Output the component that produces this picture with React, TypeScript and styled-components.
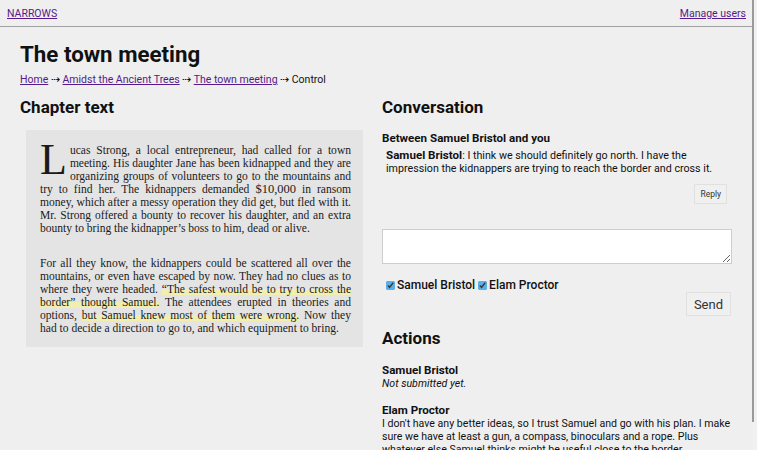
import styled, { createGlobalStyle } from 'styled-components';

const GlobalStyle = createGlobalStyle`
  html {
    background: #efefef;
  }
  body {
    margin: 0 5px 0 0;
    background: #efefef;
    font-family: Roboto, 'Liberation Sans', sans-serif;
    color: #111;
  }
  a {
    color: #551a8b;
  }
`;

const actions = [
  { name: 'Samuel Bristol', text: null },
  {
    name: 'Elam Proctor',
    text: "I don't have any better ideas, so I trust Samuel and go with his plan. I make sure we have at least a gun, a compass, binoculars and a rope. Plus whatever else Samuel thinks might be useful close to the border.",
  },
];

function App() {
  return (
    <>
      <GlobalStyle />
      <Styled.ScrollBar />
      <Styled.TopBar>
        <a href="#">NARROWS</a>
        <a href="#">Manage users</a>
      </Styled.TopBar>
      <Styled.Main>
        <Styled.Title>The town meeting</Styled.Title>
        <Styled.Breadcrumb>
          <a href="#">Home</a> ⇢ <a href="#">Amidst the Ancient Trees</a> ⇢ <a href="#">The town meeting</a> ⇢ Control
        </Styled.Breadcrumb>
        <Styled.Columns>
          <section>
            <Styled.Heading>Chapter text</Styled.Heading>
            <Styled.Chapter>
              <p>
                <Styled.DropCap>L</Styled.DropCap>ucas Strong, a local entrepreneur, had called for a town meeting. His
                daughter Jane has been kidnapped and they are organizing groups of volunteers to go to the mountains and
                try to find her. The kidnappers demanded <Styled.Money>$10,000</Styled.Money> in ransom money, which after a messy
                operation they did get, but fled with it. Mr. Strong offered a bounty to recover his daughter, and an
                extra bounty to bring the kidnapper’s boss to him, dead or alive.
              </p>
              <p>
                For all they know, the kidnappers could be scattered all over the mountains, or even have escaped by now.
                They had no clues as to where they were headed.{' '}
                <Styled.Mark>“The safest would be to try to cross the border” thought Samuel.</Styled.Mark> The attendees
                erupted in theories and options, <Styled.Mark>but Samuel knew most of them were wrong.</Styled.Mark> Now they
                had to decide a direction to go to, and which equipment to bring.
              </p>
            </Styled.Chapter>
          </section>
          <section>
            <Styled.Heading>Conversation</Styled.Heading>
            <Styled.Thread>
              <Styled.ThreadTitle>Between Samuel Bristol and you</Styled.ThreadTitle>
              <Styled.Message>
                <strong>Samuel Bristol</strong>: I think we should definitely go north. I have the impression the
                kidnappers are trying to reach the border and cross it.
              </Styled.Message>
              <Styled.ButtonRow>
                <Styled.Button small>Reply</Styled.Button>
              </Styled.ButtonRow>
            </Styled.Thread>
            <Styled.TextArea />
            <Styled.Recipients>
              <label>
                <input type="checkbox" defaultChecked />Samuel Bristol
              </label>
              <label>
                <input type="checkbox" defaultChecked />Elam Proctor
              </label>
            </Styled.Recipients>
            <Styled.SendRow>
              <Styled.Button>Send</Styled.Button>
            </Styled.SendRow>
            <Styled.Heading spaced>Actions</Styled.Heading>
            {actions.map(action => (
              <Styled.Action key={action.name}>
                <strong>{action.name}</strong>
                {action.text ? <div>{action.text}</div> : <em>Not submitted yet.</em>}
              </Styled.Action>
            ))}
          </section>
        </Styled.Columns>
      </Styled.Main>
    </>
  );
}

export default App;

const Styled = {
  ScrollBar: styled.div`
    position: fixed;
    top: 0;
    right: 0;
    bottom: 0;
    width: 5px;
    background: #f1f1f1;

    &::before {
      content: '';
      display: block;
      width: 2px;
      height: 422px;
      background: #9a9a9a;
    }
  `,
  TopBar: styled.header`
    display: flex;
    justify-content: space-between;
    align-items: center;
    height: 26px;
    padding: 0 6px 0 7px;
    border-bottom: 1px solid #a0a0a0;
    font-size: 10.5px;
  `,
  Main: styled.main`
    padding: 14px 20px 30px;
  `,
  Title: styled.h1`
    margin: 0;
    font-size: 22.3px;
    line-height: 26px;
    font-weight: 700;
  `,
  Breadcrumb: styled.div`
    margin-top: 6px;
    font-size: 10.5px;
    line-height: 13px;
  `,
  Columns: styled.div`
    display: grid;
    grid-template-columns: 1fr 1fr;
    column-gap: 12px;
    margin-top: 11px;
  `,
  Heading: styled.h2<{ spaced?: boolean }>`
    margin: ${({ spaced }) => (spaced ? '12px 0 0' : '0')};
    font-size: 17px;
    line-height: 20px;
    font-weight: 700;
  `,
  Chapter: styled.div`
    margin: 13px 7px 0 6px;
    padding: 14px 12px 12px 14px;
    background: #e4e4e4;
    font-family: 'Liberation Serif', 'DejaVu Serif', serif;
    font-size: 11.55px;
    line-height: 13px;
    text-align: justify;
    color: #1a1a1a;

    & > p {
      margin: 0;
    }
    & > p + p {
      margin-top: 22px;
    }
  `,
  DropCap: styled.span`
    float: left;
    font-size: 44px;
    line-height: 32px;
    padding: 0 3px 0 0;
  `,
  Money: styled.span`
    font-size: 12.5px;
  `,
  Mark: styled.span`
    background: linear-gradient(to bottom, transparent 50%, #f2eeb0 50%);
  `,
  Thread: styled.div`
    margin-top: 15px;
    font-size: 10.7px;
    line-height: 13px;

    strong {
      font-size: 11.6px;
    }
  `,
  ThreadTitle: styled.div`
    font-size: 11.6px;
    font-weight: 700;
  `,
  Message: styled.p`
    margin: 4px 0 0 4px;
  `,
  ButtonRow: styled.div`
    display: flex;
    justify-content: flex-end;
    margin: 9px 5px 0 0;
  `,
  Button: styled.button<{ small?: boolean }>`
    font-family: Roboto, 'Liberation Sans', sans-serif;
    font-size: ${({ small }) => (small ? '8.5px' : '13px')};
    height: ${({ small }) => (small ? '20px' : '24px')};
    padding: ${({ small }) => (small ? '0 5px' : '0 7px')};
    background: #f0f0f0;
    border: 1px solid #e0e0e0;
    border-radius: 1px;
    color: #333;
  `,
  TextArea: styled.textarea`
    display: block;
    box-sizing: border-box;
    width: 100%;
    height: 35px;
    margin-top: 25px;
    border: 1px solid #cdcdcd;
    background: #fff;
  `,
  Recipients: styled.div`
    display: flex;
    gap: 3px;
    margin: 14px 0 0 4px;
    font-size: 12px;
    font-weight: 500;

    & input {
      width: 9px;
      height: 9px;
      margin: 0 2px 0 0;
      vertical-align: -1px;
      accent-color: #5cb0ea;
    }
  `,
  SendRow: styled.div`
    display: flex;
    justify-content: flex-end;
    margin: 0 1px 0 0;
  `,
  Action: styled.div`
    display: flex;
    flex-direction: column;
    margin-top: 16px;
    font-size: 10.6px;
    line-height: 13px;

    strong {
      font-size: 11.6px;
    }

    & + & {
      margin-top: 14px;
    }
  `,
};
